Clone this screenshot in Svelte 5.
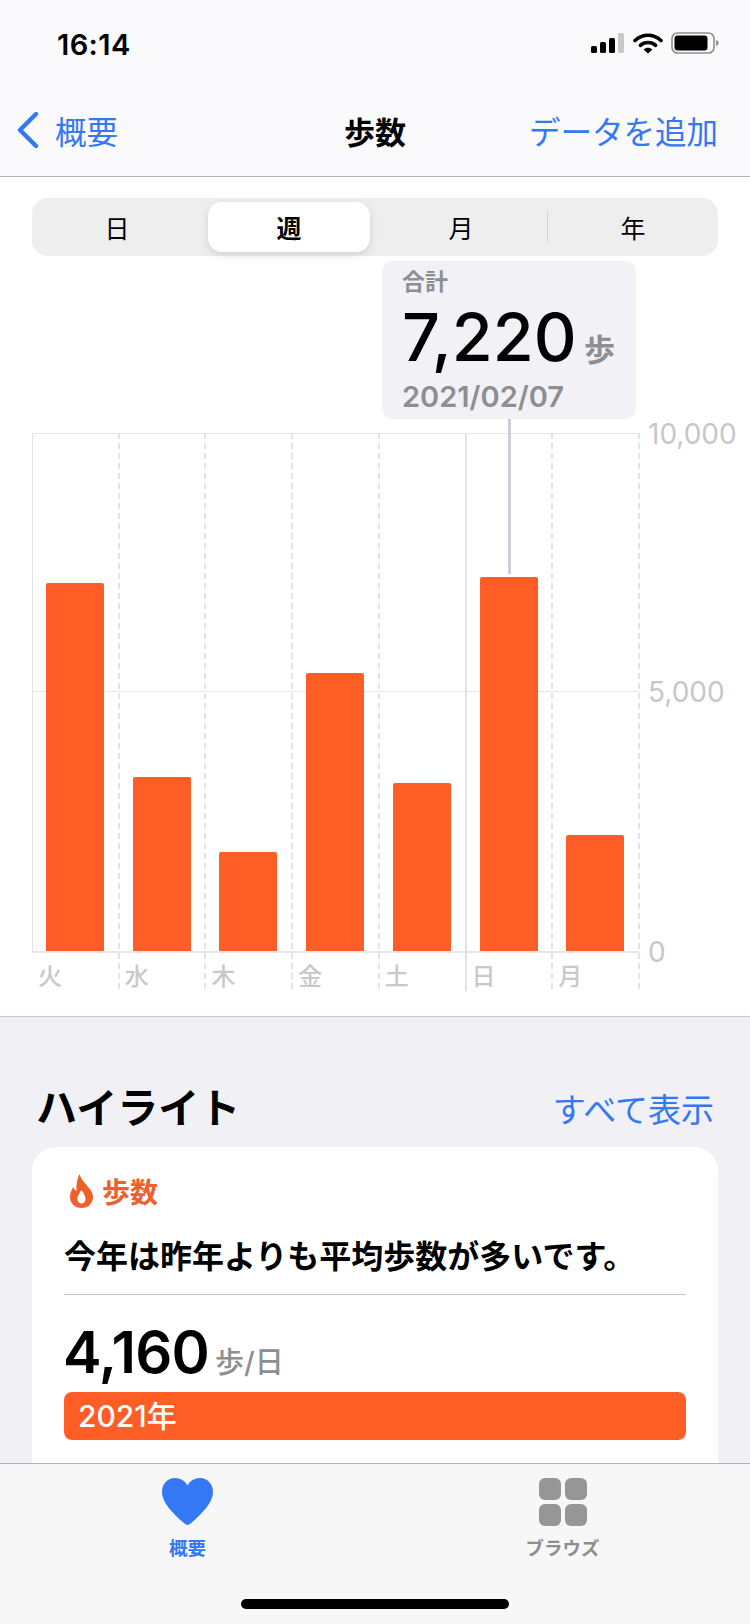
<script>
  const tabs = ['日', '週', '月', '年'];
  // bar heights in px, plot is 518 tall for 10,000 steps
  const days = [
    { label: '火', height: 368 },
    { label: '水', height: 174 },
    { label: '木', height: 99 },
    { label: '金', height: 278 },
    { label: '土', height: 168 },
    { label: '日', height: 374, current: true },
    { label: '月', height: 116 }
  ];
</script>

<div class="app">
  <header class="top">
    <div class="status">
      <span class="time">16:14</span>
      <div class="status-icons">
        <svg width="34" height="22" viewBox="0 0 34 22">
          <rect x="0" y="14" width="6" height="7" rx="1.5" fill="#000" />
          <rect x="9" y="10" width="6" height="11" rx="1.5" fill="#000" />
          <rect x="18" y="6" width="6" height="15" rx="1.5" fill="#000" />
          <rect x="27" y="1" width="6" height="20" rx="1.5" fill="#c9c9cb" />
        </svg>
        <svg width="30" height="22" viewBox="0 0 30 22">
          <path d="M2 8.5C9.5 1.5 20.5 1.5 28 8.5" fill="none" stroke="#000" stroke-width="3.6" stroke-linecap="round" />
          <path d="M7.4 13.4C11.8 9.6 18.2 9.6 22.6 13.4" fill="none" stroke="#000" stroke-width="3.6" stroke-linecap="round" />
          <path d="M10.6 17.4L15 21.6L19.4 17.4C16.8 15.2 13.2 15.2 10.6 17.4z" fill="#000" />
        </svg>
        <svg width="48" height="22" viewBox="0 0 48 22">
          <rect x="1" y="1" width="42" height="20" rx="5.5" fill="none" stroke="#8e8e90" stroke-width="1.6" />
          <rect x="3.5" y="3.5" width="33" height="15" rx="3" fill="#000" />
          <path d="M45 8c1.8.5 2.6 1.6 2.6 3s-.8 2.5-2.6 3z" fill="#8e8e90" />
        </svg>
      </div>
    </div>
    <nav class="nav">
      <div class="back">
        <svg width="24" height="38" viewBox="0 0 24 38">
          <path d="M20 3L4 19L20 35" fill="none" stroke="#3478f6" stroke-width="4.4" stroke-linecap="round" stroke-linejoin="round" />
        </svg>
        <span>概要</span>
      </div>
      <strong class="title">歩数</strong>
      <span class="add">データを追加</span>
    </nav>
  </header>

  <main class="main">
    <section class="chart">
      <div class="segments">
        {#each tabs as tab, i}
          <div class="segment" class:selected={i === 1} class:divided={i === 3}>{tab}</div>
        {/each}
      </div>

      <div class="tooltip">
        <div class="tip-label">合計</div>
        <div class="tip-value">7,220<span class="tip-unit">歩</span></div>
        <div class="tip-date">2021/02/07</div>
        <div class="tip-line"></div>
      </div>

      <div class="plot">
        <div class="mid-line"></div>
        <span class="axis a-top">10,000</span>
        <span class="axis a-mid">5,000</span>
        <span class="axis a-zero">0</span>
        {#each days as day, i}
          <div class="col" class:first={i === 0} class:current={day.current}>
            <div class="slot">
              <div class="bar" style="height: {day.height}px"></div>
            </div>
            <div class="day">{day.label}</div>
          </div>
        {/each}
      </div>
    </section>

    <section class="highlights">
      <div class="hl-head">
        <h2>ハイライト</h2>
        <span class="show-all">すべて表示</span>
      </div>
      <div class="card">
        <div class="card-title">
          <svg width="23" height="34" viewBox="0 0 23 34">
            <path fill-rule="evenodd" d="M9.5 0C10.5 4 13 7 16 10.5C20 15 23 18.5 23 23C23 29.5 18 34 11.5 34C5 34 0 29.5 0 23C0 19 1.5 15.5 3.5 13C4 15 5 16.5 6.5 17C6 11 7 5 9.5 0zM11.5 16C9 19.5 7.4 22.5 7.4 25C7.4 27.5 9.2 29.5 11.5 29.5C13.8 29.5 15.6 27.5 15.6 25C15.6 22.5 14 19.5 11.5 16z" fill="#f0602a" />
          </svg>
          <span>歩数</span>
        </div>
        <p class="statement">今年は昨年よりも平均歩数が多いです。</p>
        <div class="average"><span class="avg-value">4,160</span><span class="avg-unit">歩/日</span></div>
        <div class="year-bar">2021年</div>
      </div>
    </section>
  </main>

  <footer class="tabbar">
    <div class="tabs">
      <div class="tab active">
        <svg width="51" height="47" viewBox="0 0 51 47">
          <path d="M25.5 47c-1.2 0-2.4-.8-3.6-1.9C11 35.5 0 24.5 0 14 0 5.8 5.8 0 13 0c5.5 0 9.8 2.8 12.5 7.5C28.2 2.8 32.5 0 38 0c7.2 0 13 5.8 13 14 0 10.5-11 21.5-21.9 31.1-1.2 1.1-2.4 1.9-3.6 1.9z" fill="#3478f6" />
        </svg>
        <span>概要</span>
      </div>
      <div class="tab">
        <div class="browse-icon">
          <i></i><i></i><i></i><i></i>
        </div>
        <span>ブラウズ</span>
      </div>
    </div>
    <div class="home"></div>
  </footer>
</div>

<style>
  :global(body) {
    margin: 0;
    background: #fff;
  }

  .app {
    width: 750px;
    height: 1624px;
    display: flex;
    flex-direction: column;
    overflow: hidden;
    font-family: Inter, "Noto Sans CJK JP", sans-serif;
    color: #000;
  }

  .top {
    height: 177px;
    box-sizing: border-box;
    background: #fafafc;
    border-bottom: 1px solid #b4b4b6;
    flex: none;
  }

  .status {
    height: 88px;
    box-sizing: border-box;
    padding: 27px 31px 0 57px;
    display: flex;
    justify-content: space-between;
    align-items: flex-start;
  }

  .time {
    font-size: 29px;
    font-weight: 600;
    line-height: 36px;
    letter-spacing: 0.4px;
  }

  .status-icons {
    display: flex;
    gap: 8px;
    padding-top: 5px;
  }

  .nav {
    height: 84px;
    padding: 0 32px 0 16px;
    display: flex;
    align-items: center;
    justify-content: space-between;
    position: relative;
    font-size: 31.5px;
    color: #3478f6;
  }

  .back {
    display: flex;
    align-items: center;
    gap: 15px;
  }

  .title {
    position: absolute;
    left: 344px;
    font-size: 31px;
    font-weight: 700;
    color: #000;
  }

  .main {
    flex: 1;
    min-height: 0;
    overflow: hidden;
    background: #f0f0f5;
  }

  .chart {
    position: relative;
    height: 840px;
    box-sizing: border-box;
    padding: 21px 32px 0;
    background: #fff;
    border-bottom: 1px solid #c6c6c8;
  }

  .segments {
    height: 58px;
    box-sizing: border-box;
    padding: 4px 0;
    background: #eeeeef;
    border-radius: 16px;
    display: grid;
    grid-template-columns: repeat(4, 172px);
    justify-content: center;
  }

  .segment {
    position: relative;
    display: flex;
    align-items: center;
    justify-content: center;
    font-size: 25px;
    font-weight: 400;
    border-radius: 14px;
  }

  .segment.selected {
    width: 162px;
    justify-self: center;
    font-weight: 700;
    background: #fff;
    box-shadow: 0 3px 8px rgba(0, 0, 0, 0.12);
  }

  .segment.divided::before {
    content: '';
    position: absolute;
    left: 0;
    top: 10px;
    bottom: 10px;
    width: 1px;
    background: #cfcfd1;
  }

  .tooltip {
    position: absolute;
    left: 382px;
    top: 84px;
    width: 254px;
    height: 158px;
    box-sizing: border-box;
    padding: 6px 21px 0 20px;
    background: #f1f1f6;
    border-radius: 10px;
    z-index: 2;
  }

  .tip-label {
    font-size: 23px;
    font-weight: 700;
    line-height: 30px;
    color: #8e8e93;
  }

  .tip-value {
    font-size: 66.5px;
    font-weight: 500;
    line-height: 58px;
    display: flex;
    align-items: baseline;
    justify-content: space-between;
    margin-top: 11px;
  }

  .tip-unit {
    font-size: 31px;
    font-weight: 700;
    color: #8e8e93;
  }

  .tip-date {
    font-size: 29px;
    font-weight: 600;
    line-height: 36px;
    color: #8e8e93;
  }

  .tip-line {
    position: absolute;
    left: 126px;
    top: 158px;
    width: 3px;
    height: 155px;
    background: #cdcdd3;
  }

  .plot {
    position: relative;
    margin-top: 177px;
    width: 607px;
    display: grid;
    grid-template-columns: repeat(7, 1fr);
  }

  .mid-line {
    position: absolute;
    left: 0;
    right: 0;
    top: 258px;
    height: 1px;
    background: #e6e6e8;
  }

  .plot::after {
    content: '';
    position: absolute;
    right: -1px;
    top: 0;
    height: 556px;
    border-right: 2px dashed #e4e4e6;
  }

  .axis {
    position: absolute;
    left: 616px;
    font-size: 28px;
    line-height: 32px;
    color: #c7c7c9;
  }

  .a-top { top: -15px; }
  .a-mid { top: 243px; }
  .a-zero { top: 503px; }

  .col {
    position: relative;
    z-index: 1;
    height: 556px;
  }

  .col::before {
    content: '';
    position: absolute;
    left: -1px;
    top: 0;
    bottom: 0;
    border-left: 2px dashed #e4e4e6;
  }

  .col.first::before {
    display: none;
  }

  .col.first .slot {
    border-left: 1px solid #e4e4e6;
    padding-left: 13px;
  }

  .col.current::before {
    bottom: -2px;
    border-left: 2px solid #e2e2e4;
  }

  .slot {
    height: 520px;
    box-sizing: border-box;
    border-top: 1px solid #e6e6e8;
    border-bottom: 2px solid #e6e6e8;
    padding-left: 14px;
    display: flex;
    align-items: flex-end;
  }

  .bar {
    width: 58px;
    background: #ff5d26;
    border-radius: 2px 2px 0 0;
  }

  .day {
    height: 36px;
    box-sizing: border-box;
    padding: 9px 0 0 6px;
    font-size: 24px;
    font-weight: 500;
    line-height: 30px;
    color: #c9c9cb;
  }

  .highlights {
    padding: 52px 32px 0;
  }

  .hl-head {
    height: 78px;
    display: flex;
    justify-content: space-between;
    align-items: center;
    padding: 0 4px 0 4px;
  }

  h2 {
    margin: 0;
    font-size: 41px;
    font-weight: 700;
    line-height: 64px;
  }

  .show-all {
    font-size: 33px;
    color: #3478f6;
  }

  .card {
    background: #fff;
    border-radius: 24px 24px 0 0;
    height: 340px;
    box-sizing: border-box;
    padding: 27px 32px 0;
  }

  .card-title {
    display: flex;
    align-items: center;
    gap: 9px;
    padding-left: 6px;
    height: 33px;
    font-size: 28px;
    font-weight: 700;
    color: #f0602a;
  }

  .statement {
    margin: 27px 0 0;
    font-size: 32px;
    line-height: 46px;
    font-weight: 600;
    height: 60px;
    border-bottom: 1px solid #c6c6c8;
  }

  .average {
    margin-top: 21px;
    height: 76px;
    display: flex;
    align-items: baseline;
    gap: 6px;
  }

  .avg-value {
    font-size: 58px;
    font-weight: 600;
    line-height: 72px;
    letter-spacing: -0.8px;
    margin-left: -1px;
  }

  .avg-unit {
    font-size: 29px;
    color: #8e8e90;
    font-weight: 500;
  }

  .year-bar {
    height: 48px;
    box-sizing: border-box;
    padding-left: 14px;
    background: #ff5d26;
    border-radius: 8px;
    color: #fff;
    font-size: 30px;
    font-weight: 500;
    line-height: 48px;
  }

  .tabbar {
    height: 161px;
    flex: none;
    box-sizing: border-box;
    border-top: 1px solid #b4b4b6;
    background: #f7f7f7;
    padding-top: 14px;
  }

  .tabs {
    display: flex;
    height: 121px;
  }

  .tab {
    width: 50%;
    display: flex;
    flex-direction: column;
    align-items: center;
    font-size: 18.5px;
    font-weight: 700;
    color: #8e8e8e;
  }

  .tab.active {
    color: #3478f6;
  }

  .tab.active span {
    margin-top: 9px;
  }

  .tab span {
    margin-top: 8px;
    line-height: 28px;
  }

  .tab svg {
    display: block;
  }

  .browse-icon {
    width: 48px;
    height: 48px;
    display: grid;
    grid-template-columns: 1fr 1fr;
    gap: 4px;
  }

  .browse-icon i {
    background: #969696;
    border-radius: 6px;
  }

  .home {
    width: 268px;
    height: 10px;
    margin: 0 auto;
    background: #000;
    border-radius: 5px;
  }
</style>
